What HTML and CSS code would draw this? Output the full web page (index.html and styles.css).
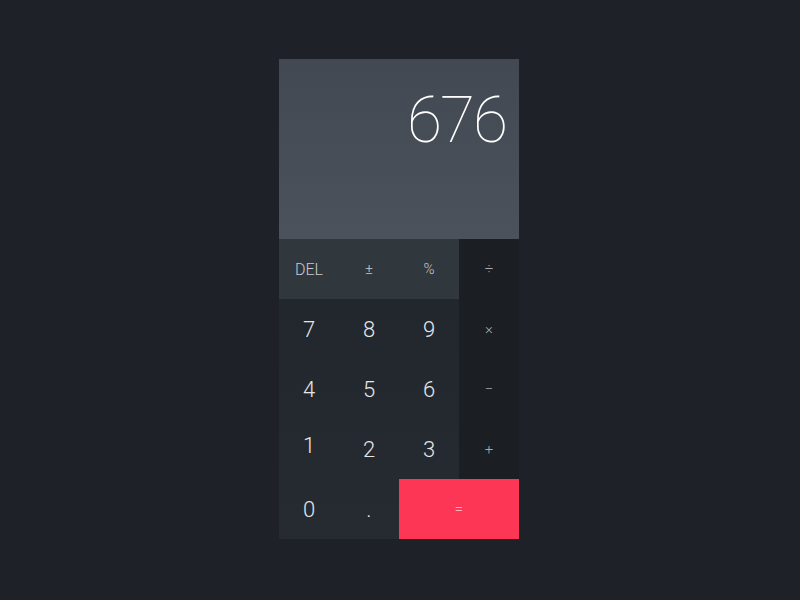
FILE: index.html
```html
<!DOCTYPE html>
<html>
<head>
<meta charset="utf-8">
<link rel="stylesheet" href="styles.css">
</head>
<body>
<div class="calc">
  <div class="display"><span class="value">676</span></div>
  <div class="keys">
    <div class="key fn del">DEL</div>
    <div class="key fn sym">±</div>
    <div class="key fn sym">%</div>
    <div class="key op">÷</div>
    <div class="key num">7</div>
    <div class="key num">8</div>
    <div class="key num">9</div>
    <div class="key op">×</div>
    <div class="key num">4</div>
    <div class="key num">5</div>
    <div class="key num">6</div>
    <div class="key op">−</div>
    <div class="key num one">1</div>
    <div class="key num">2</div>
    <div class="key num">3</div>
    <div class="key op">+</div>
    <div class="key num">0</div>
    <div class="key num">.</div>
    <div class="key eq">=</div>
  </div>
</div>
</body>
</html>
```
FILE: styles.css
```css
html, body {
  margin: 0;
  padding: 0;
  background: #1e2128;
  font-family: Roboto, "Liberation Sans", sans-serif;
}
body {
  padding-top: 59px;
}
.calc {
  width: 240px;
  margin: 0 0 0 279px;
}
.display {
  height: 180px;
  background: linear-gradient(#434952, #4b525c);
  display: flex;
  justify-content: flex-end;
  align-items: flex-start;
  box-sizing: border-box;
  padding: 22px 13px 0 0;
}
.value {
  color: #ffffff;
  font-size: 64px;
  font-weight: 100;
  letter-spacing: -2px;
  line-height: 80px;
}
.keys {
  display: grid;
  grid-template-columns: repeat(4, 60px);
  grid-auto-rows: 60px;
  background: linear-gradient(#21262c, #262b31);
}
.key {
  display: flex;
  align-items: center;
  justify-content: center;
  color: #e4e6e8;
  font-weight: 300;
}
.fn {
  background: #30373d;
  color: #c8cbce;
}
.del {
  font-size: 16px;
}
.sym {
  font-size: 15px;
}
.num {
  font-size: 22px;
}
.one {
  padding-bottom: 8px;
}
.op {
  background: #1b1e23;
  color: #a9adb2;
  font-size: 15px;
}
.eq {
  grid-column: span 2;
  background: #fd3656;
  color: #ffb3c0;
  font-size: 15px;
}
```
